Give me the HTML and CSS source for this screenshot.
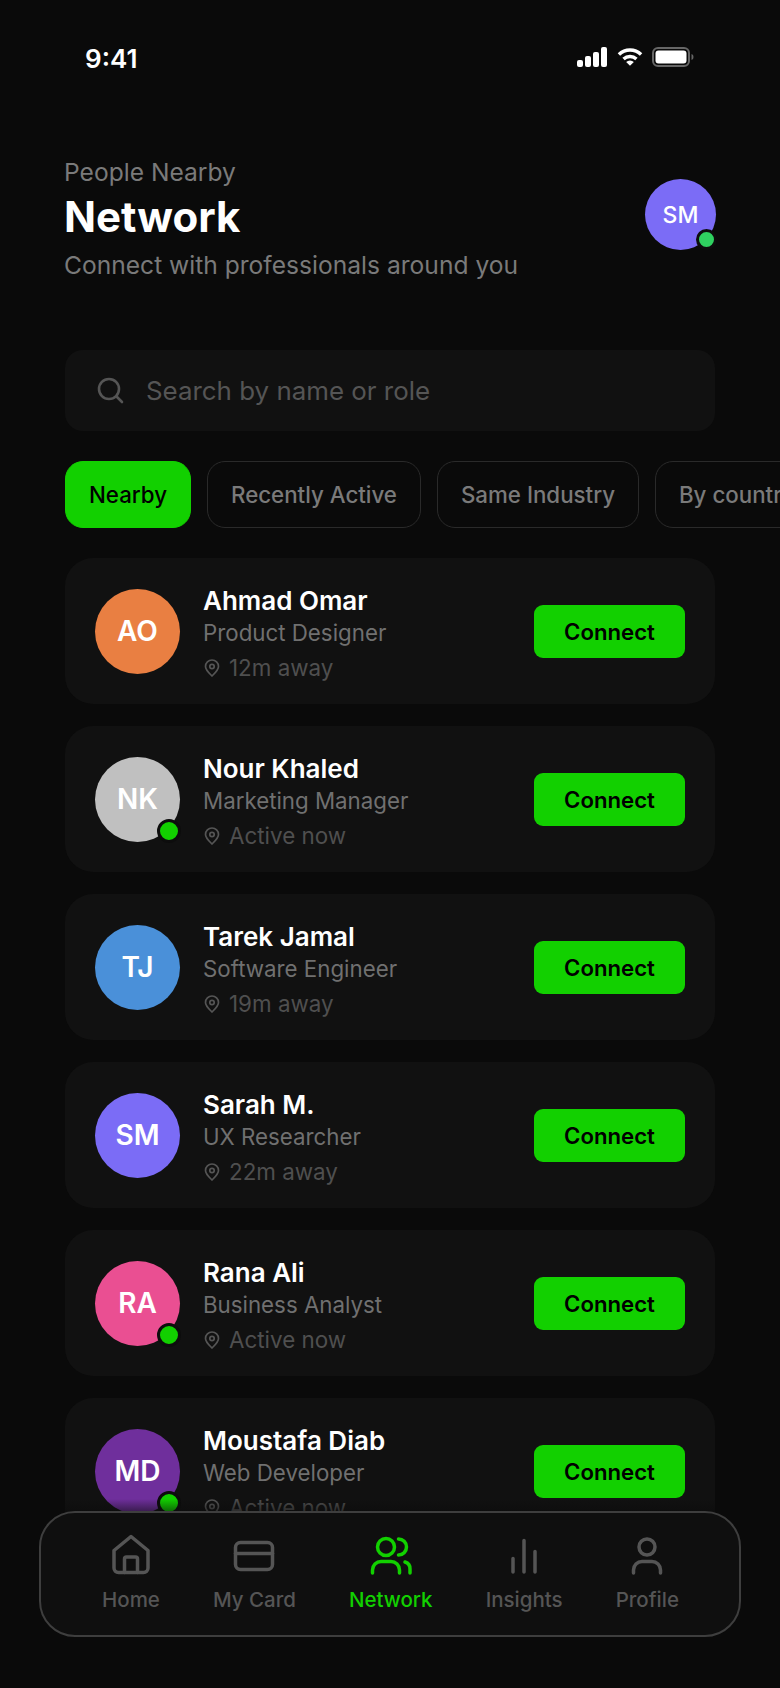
FILE: index.html
```html
<!DOCTYPE html>
<html lang="en">
<head>
  <meta charset="UTF-8">
  <meta name="viewport" content="width=device-width, initial-scale=1.0">
  <title>Network</title>
  <link rel="stylesheet" href="styles.css">
</head>
<body>
  <div class="screen">
    <div class="status-bar">
      <span class="status-time">9:41</span>
      <div class="status-icons">
        <svg width="30" height="20" viewBox="0 0 30 20" fill="#fff">
          <rect x="0" y="13" width="6" height="7" rx="2"/>
          <rect x="8" y="9" width="6" height="11" rx="2"/>
          <rect x="16" y="5" width="6" height="15" rx="2"/>
          <rect x="24" y="0" width="6" height="20" rx="2"/>
        </svg>
        <svg width="26" height="20" viewBox="0 0 27 20" fill="none" stroke="#fff" stroke-width="3.6">
          <path d="M2 7.5a16.5 16.5 0 0 1 23 0"/>
          <path d="M6.8 12a10 10 0 0 1 13.4 0"/>
          <path d="M9.5 15.2l4 4 4-4a5.6 5.6 0 0 0-8 0z" fill="#fff" stroke="none"/>
        </svg>
        <svg width="42" height="20" viewBox="0 0 42 20" fill="none">
          <rect x="1" y="1" width="36" height="18" rx="5" stroke="#666" stroke-width="2"/>
          <rect x="3.500" y="3.500" width="31" height="13" rx="3" fill="#fff"/>
          <path d="M39.500 7v6a3 3 0 0 0 2-3 3 3 0 0 0-2-3z" fill="#666"/>
        </svg>
      </div>
    </div>

    <header class="page-head">
      <div class="head-text">
        <p class="head-over">People Nearby</p>
        <h1 class="head-title">Network</h1>
        <p class="head-sub">Connect with professionals around you</p>
      </div>
      <div class="avatar avatar-head c-purple">SM<span class="dot dot-head"></span></div>
    </header>

    <div class="search">
      <svg width="27" height="27" viewBox="0 0 27 27" fill="none" stroke="#555" stroke-width="2.600" stroke-linecap="round">
        <circle cx="12" cy="12" r="10"/>
        <path d="M19.500 19.500L25 25"/>
      </svg>
      <span class="search-text">Search by name or role</span>
    </div>

    <div class="filters">
      <span class="pill pill-on">Nearby</span>
      <span class="pill">Recently Active</span>
      <span class="pill">Same Industry</span>
      <span class="pill">By country</span>
    </div>

    <div class="list">
      <div class="card">
        <div class="avatar c-orange">AO</div>
        <div class="info">
          <div class="name">Ahmad Omar</div>
          <div class="role">Product Designer</div>
          <div class="dist"><svg class="pin" width="16" height="18" viewBox="0 0 16 18" fill="none" stroke="#555" stroke-width="1.700"><path d="M8 17c-3-3-6.500-6-6.500-9.500a6.500 6.500 0 0 1 13 0C14.500 11 11 14 8 17z"/><circle cx="8" cy="7.500" r="2.200"/></svg>12m away</div>
        </div>
        <button class="btn-connect">Connect</button>
      </div>
      <div class="card">
        <div class="avatar c-grey">NK<span class="dot"></span></div>
        <div class="info">
          <div class="name">Nour Khaled</div>
          <div class="role">Marketing Manager</div>
          <div class="dist"><svg class="pin" width="16" height="18" viewBox="0 0 16 18" fill="none" stroke="#555" stroke-width="1.700"><path d="M8 17c-3-3-6.500-6-6.500-9.500a6.500 6.500 0 0 1 13 0C14.500 11 11 14 8 17z"/><circle cx="8" cy="7.500" r="2.200"/></svg>Active now</div>
        </div>
        <button class="btn-connect">Connect</button>
      </div>
      <div class="card">
        <div class="avatar c-blue">TJ</div>
        <div class="info">
          <div class="name">Tarek Jamal</div>
          <div class="role">Software Engineer</div>
          <div class="dist"><svg class="pin" width="16" height="18" viewBox="0 0 16 18" fill="none" stroke="#555" stroke-width="1.700"><path d="M8 17c-3-3-6.500-6-6.500-9.500a6.500 6.500 0 0 1 13 0C14.500 11 11 14 8 17z"/><circle cx="8" cy="7.500" r="2.200"/></svg>19m away</div>
        </div>
        <button class="btn-connect">Connect</button>
      </div>
      <div class="card">
        <div class="avatar c-purple">SM</div>
        <div class="info">
          <div class="name">Sarah M.</div>
          <div class="role">UX Researcher</div>
          <div class="dist"><svg class="pin" width="16" height="18" viewBox="0 0 16 18" fill="none" stroke="#555" stroke-width="1.700"><path d="M8 17c-3-3-6.500-6-6.500-9.500a6.500 6.500 0 0 1 13 0C14.500 11 11 14 8 17z"/><circle cx="8" cy="7.500" r="2.200"/></svg>22m away</div>
        </div>
        <button class="btn-connect">Connect</button>
      </div>
      <div class="card">
        <div class="avatar c-pink">RA<span class="dot"></span></div>
        <div class="info">
          <div class="name">Rana Ali</div>
          <div class="role">Business Analyst</div>
          <div class="dist"><svg class="pin" width="16" height="18" viewBox="0 0 16 18" fill="none" stroke="#555" stroke-width="1.700"><path d="M8 17c-3-3-6.500-6-6.500-9.500a6.500 6.500 0 0 1 13 0C14.500 11 11 14 8 17z"/><circle cx="8" cy="7.500" r="2.200"/></svg>Active now</div>
        </div>
        <button class="btn-connect">Connect</button>
      </div>
      <div class="card">
        <div class="avatar c-violet">MD<span class="dot"></span></div>
        <div class="info">
          <div class="name">Moustafa Diab</div>
          <div class="role">Web Developer</div>
          <div class="dist"><svg class="pin" width="16" height="18" viewBox="0 0 16 18" fill="none" stroke="#555" stroke-width="1.700"><path d="M8 17c-3-3-6.500-6-6.500-9.500a6.500 6.500 0 0 1 13 0C14.500 11 11 14 8 17z"/><circle cx="8" cy="7.500" r="2.200"/></svg>Active now</div>
        </div>
        <button class="btn-connect">Connect</button>
      </div>
    </div>

    <div class="list-fade"></div>

    <nav class="tabbar">
      <div class="tab">
        <svg class="tab-icon" width="44" height="44" viewBox="0 0 44 44">
          <path d="M22 3.500L39 17.500V35a4.500 4.500 0 0 1-4.500 4.500h-25A4.500 4.500 0 0 1 5 35V17.500z"/>
          <path d="M15.500 39.500V26a2 2 0 0 1 2-2h9a2 2 0 0 1 2 2v13.500"/>
        </svg>
        <span>Home</span>
      </div>
      <div class="tab">
        <svg class="tab-icon" width="44" height="44" viewBox="0 0 44 44">
          <rect x="3.500" y="9.500" width="37" height="27" rx="5"/>
          <path d="M3.500 20.500h37"/>
        </svg>
        <span>My Card</span>
      </div>
      <div class="tab tab-on">
        <svg class="tab-icon" width="44" height="44" viewBox="0 0 44 44">
          <circle cx="17" cy="14" r="8.500"/>
          <path d="M29.500 6a8 8 0 0 1 0 16"/>
          <path d="M3.500 40v-3a8.500 8.500 0 0 1 8.500-8.500h10a8.500 8.500 0 0 1 8.500 8.500v3"/>
          <path d="M36 29a7 7 0 0 1 5 7v4"/>
        </svg>
        <span>Network</span>
      </div>
      <div class="tab">
        <svg class="tab-icon" width="44" height="44" viewBox="0 0 44 44">
          <path d="M11 25.500V39M22 7.500V39M33 18.500V39"/>
        </svg>
        <span>Insights</span>
      </div>
      <div class="tab">
        <svg class="tab-icon" width="44" height="44" viewBox="0 0 44 44">
          <circle cx="22" cy="14" r="8"/>
          <path d="M8.500 40v-3a8.500 8.500 0 0 1 8.500-8.500h10a8.500 8.500 0 0 1 8.500 8.500v3"/>
        </svg>
        <span>Profile</span>
      </div>
    </nav>
  </div>
</body>
</html>
```

FILE: styles.css
```css
* {
  box-sizing: border-box;
}
body {
  margin: 0;
  background-color: #0a0a0a;
  font-family: Inter, "Liberation Sans", sans-serif;
}
.screen {
  position: relative;
  width: 780px;
  height: 1688px;
  overflow: hidden;
  background-color: #0a0a0a;
}

/* status bar */
.status-bar {
  display: flex;
  justify-content: space-between;
  align-items: center;
  height: 20px;
  margin-top: 47px;
  padding: 0 86px 0 85px;
}
.status-time {
  margin-top: 2px;
  color: #fff;
  font-size: 26px;
  font-weight: 600;
}
.status-icons {
  display: flex;
  align-items: center;
  gap: 9.500px;
}

/* header */
.page-head {
  display: flex;
  justify-content: space-between;
  align-items: flex-start;
  margin-top: 89px;
  padding: 0 64px;
}
.head-over,
.head-sub {
  margin: 0;
  color: #7a7a7a;
  font-size: 24.600px;
  line-height: 34px;
}
.head-over {
  margin-top: -1px;
}
.head-title {
  margin: -1px 0 2px;
  color: #fff;
  font-size: 42px;
  font-weight: 700;
  line-height: 58px;
}

/* avatars */
.avatar {
  position: relative;
  flex: none;
  display: flex;
  justify-content: center;
  align-items: center;
  width: 85px;
  height: 85px;
  border-radius: 50%;
  color: #fff;
  font-size: 28px;
  font-weight: 600;
}
.avatar-head {
  width: 71px;
  height: 71px;
  margin-top: 23px;
  font-size: 23px;
  font-weight: 500;
}
.dot {
  position: absolute;
  right: -1px;
  bottom: -1px;
  width: 24px;
  height: 24px;
  border: 3px solid #0d0d0d;
  border-radius: 50%;
  background-color: #12d000;
}
.dot-head {
  right: -1px;
  bottom: 0;
  width: 21px;
  height: 21px;
  background-color: #2fd160;
}
.c-orange { background-color: #e97f42; }
.c-grey { background-color: #c0c0c0; }
.c-blue { background-color: #4a90d9; }
.c-purple { background-color: #7b6cf6; }
.c-pink { background-color: #ea4f92; }
.c-violet { background-color: #6f2f9c; }

/* search */
.search {
  display: flex;
  align-items: center;
  gap: 22px;
  height: 81px;
  margin: 68px 65px 0;
  padding: 0 32px;
  border-radius: 18px;
  background-color: #111;
}
.search-text {
  color: #555;
  font-size: 25.900px;
}

/* filter pills */
.filters {
  display: flex;
  gap: 16px;
  margin-top: 30px;
  padding-left: 65px;
  overflow: hidden;
}
.pill {
  flex: none;
  display: flex;
  align-items: center;
  height: 67px;
  padding: 0 23px;
  border: 1.500px solid #2a2a2a;
  border-radius: 18px;
  color: #7a7a7a;
  font-size: 22.300px;
  font-weight: 500;
}
.pill-on {
  border-color: #12d000;
  background-color: #12d000;
  color: #000;
}

/* people list */
.list {
  display: flex;
  flex-direction: column;
  gap: 22px;
  margin-top: 30px;
  padding: 0 65px;
}
.card {
  flex: none;
  display: flex;
  align-items: center;
  gap: 23px;
  height: 146px;
  padding: 0 30px;
  border-radius: 28px;
  background-color: #111;
}
.info {
  flex: 1;
  min-width: 0;
  margin-top: 7px;
}
.name {
  color: #fff;
  font-size: 26px;
  font-weight: 600;
  line-height: 32px;
}
.role {
  margin-top: -1px;
  color: #707070;
  font-size: 22.300px;
  line-height: 33px;
}
.dist {
  display: flex;
  align-items: center;
  gap: 9px;
  margin-top: 2px;
  color: #4f4f4f;
  font-size: 22.400px;
  line-height: 33px;
}
.pin {
  flex: none;
  margin-left: 1px;
}
.btn-connect {
  flex: none;
  width: 151px;
  height: 53px;
  border: none;
  border-radius: 9px;
  background-color: #12d000;
  color: #000;
  font-family: inherit;
  font-size: 22.200px;
  font-weight: 600;
}

/* fade above the tab bar */
.list-fade {
  position: absolute;
  left: 0;
  right: 0;
  bottom: 0;
  height: 189px;
  background: linear-gradient(to bottom, rgba(10,10,10,0) 0, rgba(10,10,10,0.5) 12px, #0a0a0a 50px);
}

/* tab bar */
.tabbar {
  position: absolute;
  left: 39px;
  bottom: 51px;
  display: flex;
  justify-content: space-between;
  width: 702px;
  height: 126px;
  padding: 20px 60px 0 61px;
  border: 2px solid #3e3e3e;
  border-radius: 36px;
  background-color: #0f0f0f;
}
.tab {
  display: flex;
  flex-direction: column;
  align-items: center;
  gap: 9px;
  color: #555;
  font-size: 20.500px;
  font-weight: 500;
  line-height: 28px;
}
.tab-icon {
  fill: none;
  stroke: #555;
  stroke-width: 3.500;
  stroke-linecap: round;
  stroke-linejoin: round;
}
.tab-on {
  color: #12d000;
}
.tab-on .tab-icon {
  stroke: #12d000;
}
```
